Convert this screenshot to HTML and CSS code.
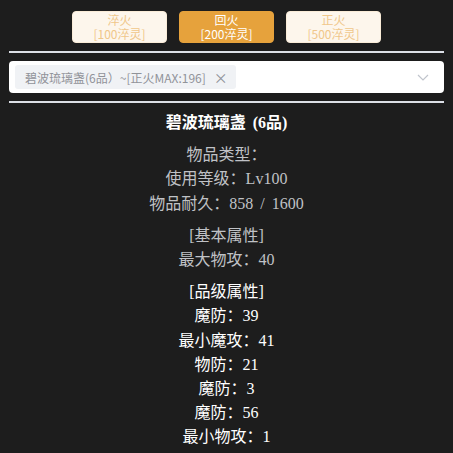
FILE: index.html
```html
<!DOCTYPE html>
<html lang="zh-CN">
<head>
    <meta charset="UTF-8">
    <meta name="viewport" content="width=device-width, initial-scale=1.0">
    <title>淬火</title>
    <link rel="stylesheet" href="styles.css">
</head>
<body>
    <div class="page">
        <!-- 淬火类型 -->
        <div class="tabs">
            <button class="tab" disabled>淬火<br>[100淬灵]</button>
            <button class="tab active">回火<br>[200淬灵]</button>
            <button class="tab" disabled>正火<br>[500淬灵]</button>
        </div>

        <div class="rule"></div>

        <!-- 装备选择 -->
        <div class="select">
            <span class="tag">碧波琉璃盏(6品）~[正火MAX:196] <span class="tag-close">&#215;</span></span>
            <svg class="arrow" width="14" height="14" viewBox="0 0 14 14">
                <path d="M2 5 L7 10 L12 5" fill="none" stroke="#c0c4cc" stroke-width="1.2"/>
            </svg>
        </div>

        <div class="rule"></div>

        <!-- 装备详情 -->
        <div class="detail">
            <div class="title">碧波琉璃盏 (6品)</div>
            <div class="group grey">
                <p>物品类型：</p>
                <p>使用等级：Lv100</p>
                <p>物品耐久：858 / 1600</p>
            </div>
            <div class="group grey">
                <p>[基本属性]</p>
                <p>最大物攻：40</p>
            </div>
            <div class="group">
                <p>[品级属性]</p>
                <p>魔防：39</p>
                <p>最小魔攻：41</p>
                <p>物防：21</p>
                <p>魔防：3</p>
                <p>魔防：56</p>
                <p>最小物攻：1</p>
            </div>
        </div>
    </div>
</body>
</html>
```

FILE: styles.css
```css
body {
    margin: 0;
    background-color: #1d1d1d;
    font-family: "Liberation Serif", "Noto Sans CJK SC", serif;
}

.page {
    padding: 11px 9px 0;
}

.tabs {
    display: flex;
    justify-content: center;
    gap: 12px;
}

.tab {
    width: 95px;
    height: 32px;
    padding: 0;
    border: 1px solid #faecd8;
    border-radius: 4px;
    background-color: #fdf6ec;
    color: #f0c78a;
    font-family: "Noto Sans CJK SC", sans-serif;
    font-size: 12px;
    line-height: 14px;
}

.tab.active {
    background-color: #e6a23c;
    border-color: #e6a23c;
    color: #fff;
}

.rule {
    height: 2px;
    margin-top: 8px;
    background-color: #dcdfe6;
}

.select {
    display: flex;
    align-items: center;
    height: 32px;
    margin-top: 8px;
    padding: 0 14px 0 6px;
    background-color: #fff;
    border-radius: 4px;
}

.tag {
    display: inline-flex;
    align-items: center;
    height: 24px;
    padding: 0 8px 0 10px;
    background-color: #f0f2f5;
    border-radius: 3px;
    color: #909399;
    font-family: "Noto Sans CJK SC", sans-serif;
    font-size: 12px;
}

.tag-close {
    margin-left: 8px;
    font-size: 14px;
}

.arrow {
    margin-left: auto;
}

.detail {
    text-align: center;
    color: #fff;
    font-size: 16px;
    line-height: 24.2px;
    word-spacing: 3px;
    padding-top: 8px;
}

.title {
    font-weight: bold;
}

.group {
    margin-top: 8px;
}

.group p {
    margin: 0;
}

.grey {
    color: #c0c2c6;
}
```
